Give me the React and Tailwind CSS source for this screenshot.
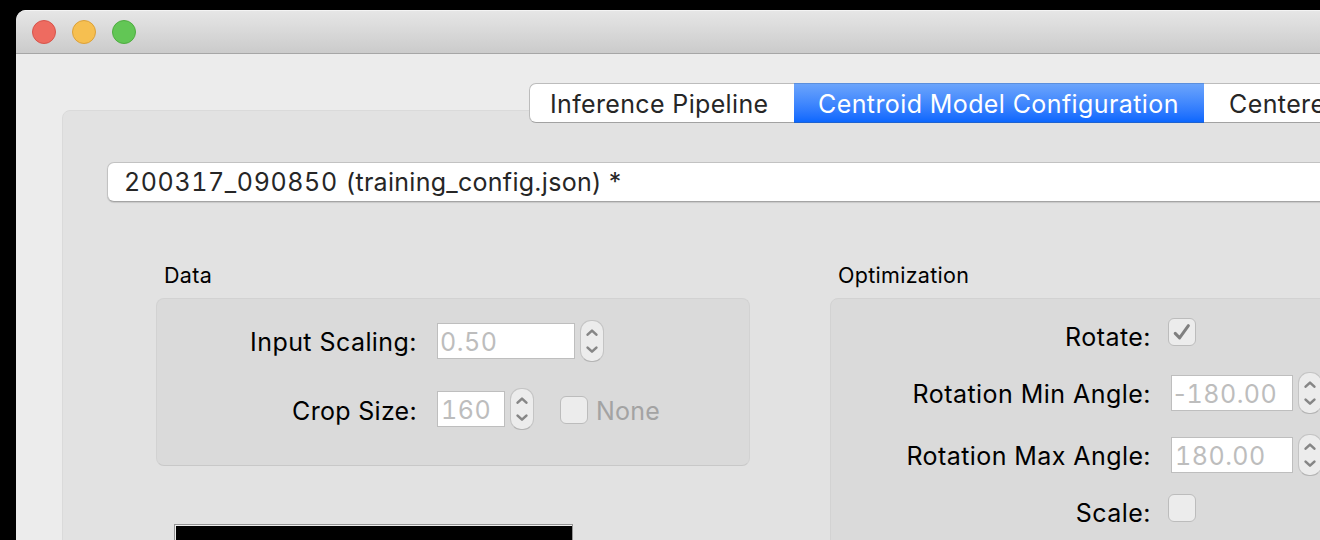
import React from "react";

function Text({ className = "", children }) {
  return <span className={"block w-max shrink-0 whitespace-pre " + className}>{children}</span>;
}

function Stepper({ className = "" }) {
  return (
    <div className={"h-[42px] w-6 shrink-0 rounded-[11px] border border-[#c4c4c4] border-b-[#b4b4b4] bg-[#ececec] " + className}>
      <svg viewBox="0 0 22 40" className="block h-10 w-[22px]" fill="none" stroke="#868686" strokeWidth="2.6" strokeLinecap="round" strokeLinejoin="round">
        <path d="M6.6 13.6 L11 9.6 L15.4 13.6" />
        <path d="M6.6 26.6 L11 30.6 L15.4 26.6" />
      </svg>
    </div>
  );
}

function Checkbox({ checked = false, className = "" }) {
  return (
    <div className={"h-7 w-7 shrink-0 rounded-[6px] border border-[#bcbcbc] bg-[#ececec] " + className}>
      {checked && (
        <svg viewBox="0 0 26 26" className="block h-[26px] w-[26px]" fill="none" stroke="#7f7f7f" strokeWidth="3" strokeLinecap="round" strokeLinejoin="round">
          <path d="M6.2 14.4 L10.6 18.9 L19.4 6.6" />
        </svg>
      )}
    </div>
  );
}

function Field({ className = "", children }) {
  return (
    <div className={"flex h-9 shrink-0 overflow-hidden border border-[#bebebe] bg-white pt-[2px] text-[25px] leading-[32px] tracking-[0.5px] tabular-nums text-[#bdbdbd] " + className}>
      {children}
    </div>
  );
}

function Label({ className = "", children }) {
  return <div className={"flex shrink-0 justify-end text-[25px] leading-[32px] text-black " + className}>{children}</div>;
}

export default function App() {
  return (
    <div className="h-[540px] w-[1320px] overflow-hidden bg-black pt-[10px] pl-4 font-['Inter',sans-serif]">
      <div className="h-[530px] overflow-hidden rounded-tl-[10px] bg-[#ececec]">
        <div className="flex h-11 items-center gap-4 border-t border-b border-t-[#f4f4f4] border-b-[#a6a6a6] bg-linear-to-b from-[#e6e6e6] to-[#cbcbcb] pl-4">
          <div className="h-6 w-6 rounded-full border border-[#d6544b] bg-[#ee6b60]" />
          <div className="h-6 w-6 rounded-full border border-[#dba03a] bg-[#f6bf50]" />
          <div className="h-6 w-6 rounded-full border border-[#4fac41] bg-[#62c655]" />
        </div>

        <div className="relative z-10 mt-[29px] ml-[513px] flex h-10 text-[25px] leading-[32px] tracking-[0.4px] text-[#262626]">
          <div className="w-[265px] shrink-0 rounded-l-[7px] border border-r-0 border-[#bcbcbc] border-b-[#a2a2a2] bg-white pt-1 pl-5">
            <Text className="tracking-[0.35px]">Inference Pipeline</Text>
          </div>
          <div className="w-[410px] shrink-0 border-t border-b border-t-[#5b8fdd] border-b-[#1e62cf] bg-linear-to-b from-[#6ba4fb] to-[#0a67fe] pt-1 pl-6 text-white">
            <Text>Centroid Model Configuration</Text>
          </div>
          <div className="w-[116px] shrink-0 border-t border-b border-t-[#bcbcbc] border-b-[#a2a2a2] bg-white pt-1 pl-[25px]">
            <Text>Centere</Text>
          </div>
        </div>

        <div className="-mt-[13px] ml-[46px] h-[440px] w-[1400px] rounded-tl-[8px] border border-[#dadada] bg-[#e2e2e2] pt-[51px] pl-11">
          <div className="flex h-10 rounded-[7px] border border-[#c2c2c2] border-b-[#a4a4a4] bg-white pt-[3px] pl-4 text-[25px] leading-[32px] text-[#262626] shadow-[0_1px_1px_rgba(0,0,0,0.12)]">
            <Text className="tracking-[0.6px] tabular-nums">200317_090850</Text>
            <Text className="ml-px tracking-[0.28px]"> (training_config.json) *</Text>
          </div>

          <div className="mt-[59px] ml-[49px] flex gap-20">
            <div className="w-[594px] shrink-0">
              <div className="h-[37px] pl-2 text-[21.5px] leading-[28px] tracking-[0.3px] text-black"><Text>Data</Text></div>
              <div className="h-[168px] rounded-[8px] border border-[#d2d2d2] border-b-[#c8c8c8] bg-[#dadada] pt-[21px]">
                <div className="flex h-[42px] items-start">
                  <Label className="w-[260px] pt-[6px] tracking-[0.44px]"><Text>Input Scaling:</Text></Label>
                  <Field className="mt-[3px] ml-5 w-[138px] pl-[2px]"><Text>0.50</Text></Field>
                  <Stepper className="ml-[5px]" />
                </div>
                <div className="mt-[26px] flex h-[42px] items-start">
                  <Label className="w-[260px] pt-[7px] tracking-[0.3px]"><Text>Crop Size:</Text></Label>
                  <Field className="mt-[3px] ml-5 w-[68px] pl-[3px]"><Text>160</Text></Field>
                  <Stepper className="ml-[5px]" />
                  <Checkbox className="mt-2 ml-[26px]" />
                  <div className="ml-2 pt-[7px] text-[25px] leading-[32px] tracking-[0.2px] text-[#a3a3a3]"><Text>None</Text></div>
                </div>
              </div>
              <div className="mt-[58px] ml-[18px] h-[100px] w-[399px] border border-[#949494] bg-[#eeeeee] pt-px pl-px">
                <div className="h-full bg-black" />
              </div>
            </div>

            <div className="w-[600px] shrink-0">
              <div className="h-[37px] pl-2 text-[21.5px] leading-[28px] tracking-[0.3px] text-black"><Text>Optimization</Text></div>
              <div className="h-[300px] rounded-[8px] border border-[#d2d2d2] bg-[#dadada] pt-[19px]">
                <div className="flex h-[54px] items-start">
                  <Label className="w-[320px] pt-[3px] tracking-[0.46px]"><Text>Rotate:</Text></Label>
                  <Checkbox checked className="ml-[17px]" />
                </div>
                <div className="flex h-[62px] items-start">
                  <Label className="w-[320px] pt-[6px] tracking-[0.46px]"><Text>Rotation Min Angle:</Text></Label>
                  <Field className="mt-[3px] ml-[20px] w-[122px] pl-[2px]">
                    <Text className="tracking-[1px] proportional-nums">-</Text>
                    <Text>180.00</Text>
                  </Field>
                  <Stepper className="ml-[5px]" />
                </div>
                <div className="flex h-[60px] items-start">
                  <Label className="w-[320px] pt-[6px] tracking-[0.42px]"><Text>Rotation Max Angle:</Text></Label>
                  <Field className="mt-[3px] ml-[20px] w-[122px] pl-[3px]"><Text>180.00</Text></Field>
                  <Stepper className="ml-[5px]" />
                </div>
                <div className="flex items-start">
                  <Label className="w-[320px] pt-[3px] tracking-[0.46px]"><Text>Scale:</Text></Label>
                  <Checkbox className="ml-[17px]" />
                </div>
              </div>
            </div>
          </div>
        </div>
      </div>
    </div>
  );
}
